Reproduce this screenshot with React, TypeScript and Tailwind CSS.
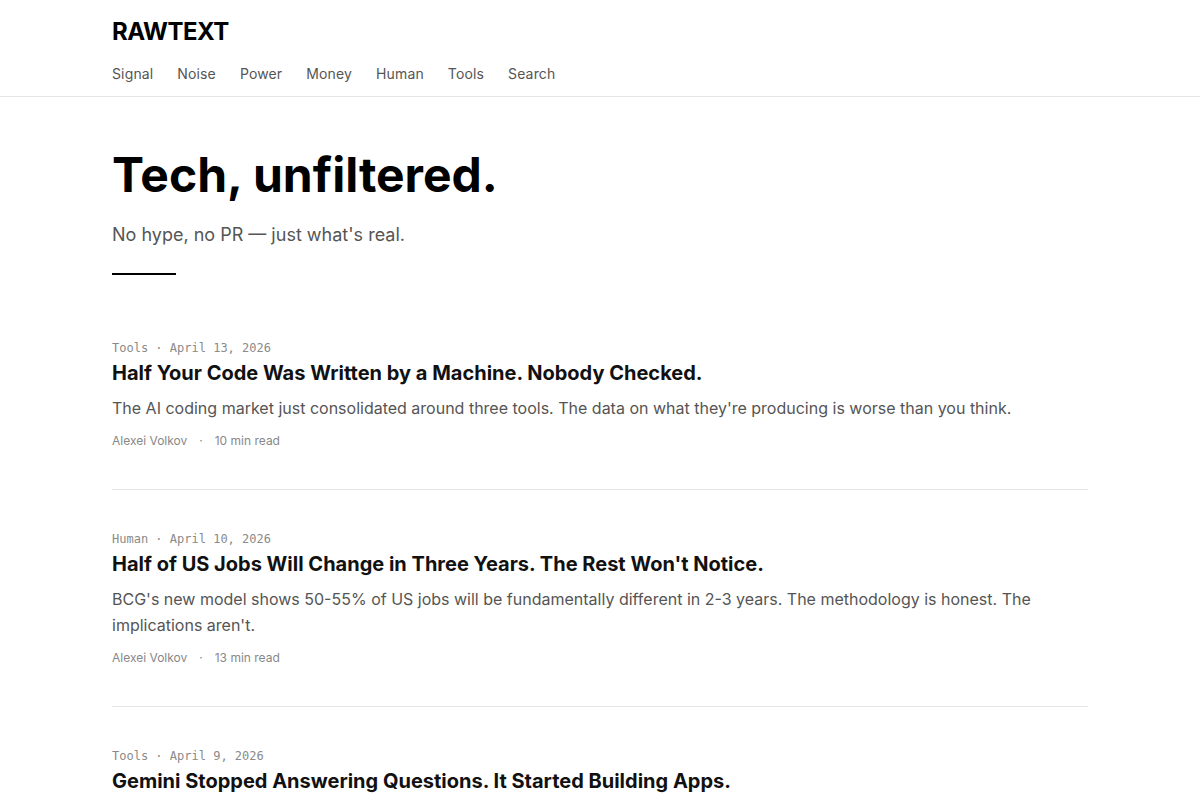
import React from 'react';

const nav = ['Signal', 'Noise', 'Power', 'Money', 'Human', 'Tools', 'Search'];

const posts = [
  {
    tag: 'Tools',
    date: 'April 13, 2026',
    title: 'Half Your Code Was Written by a Machine. Nobody Checked.',
    excerpt: "The AI coding market just consolidated around three tools. The data on what they're producing is worse than you think.",
    author: 'Alexei Volkov',
    read: '10 min read',
  },
  {
    tag: 'Human',
    date: 'April 10, 2026',
    title: "Half of US Jobs Will Change in Three Years. The Rest Won't Notice.",
    excerpt: "BCG's new model shows 50-55% of US jobs will be fundamentally different in 2-3 years. The methodology is honest. The implications aren't.",
    author: 'Alexei Volkov',
    read: '13 min read',
  },
  {
    tag: 'Tools',
    date: 'April 9, 2026',
    title: 'Gemini Stopped Answering Questions. It Started Building Apps.',
    excerpt: 'Google quietly turned its chatbot into an app builder. What that means for everyone else shipping software.',
    author: 'Alexei Volkov',
    read: '9 min read',
  },
];

export default function App() {
  return (
    <div className="min-h-screen bg-white text-[#111] font-['Inter','Liberation_Sans',sans-serif]">
      {/* Header */}
      <header className="border-b border-[#e5e5e5]">
        <div className="max-w-5xl mx-auto px-6 pt-[18px] pb-[12px]">
          <a className="block text-[24px] leading-[28px] font-bold tracking-[-0.02em] text-black">RAWTEXT</a>
          <nav className="flex gap-6 mt-[18px] text-[14px] leading-[20px] tracking-[0.01em] text-[#555]">
            {nav.map((n) => (
              <a key={n}>{n}</a>
            ))}
          </nav>
        </div>
      </header>

      <main className="max-w-5xl mx-auto px-6">
        {/* Hero */}
        <section className="pt-[50px] pb-[65px]">
          <h1 className="text-[48px] leading-[56px] font-bold text-black">Tech, unfiltered.</h1>
          <p className="mt-[18px] text-[18px] leading-[28px] text-[#555]">No hype, no PR — just what's real.</p>
          <div className="mt-[24px] w-16 h-[2px] bg-black" />
        </section>

        {/* Posts */}
        <div>
          {posts.map((p, i) => (
            <article key={i} className="pt-[41px] pb-[38px] border-b border-[#e5e5e5] first:pt-0">
              <div className="font-['DejaVu_Sans_Mono','Liberation_Mono',monospace] text-[12px] leading-4 text-[#8a8a8a]">
                {p.tag} · {p.date}
              </div>
              <h2 className="mt-[3px] text-[20px] leading-[28px] font-bold text-[#111]">{p.title}</h2>
              <p className="mt-[8px] text-[16px] leading-[26px] text-[#555]">{p.excerpt}</p>
              <div className="mt-[10px] flex items-center gap-3 text-[12px] leading-[20px] text-[#888]">
                <span>{p.author}</span>
                <span>·</span>
                <span>{p.read}</span>
              </div>
            </article>
          ))}
        </div>
      </main>
    </div>
  );
}
